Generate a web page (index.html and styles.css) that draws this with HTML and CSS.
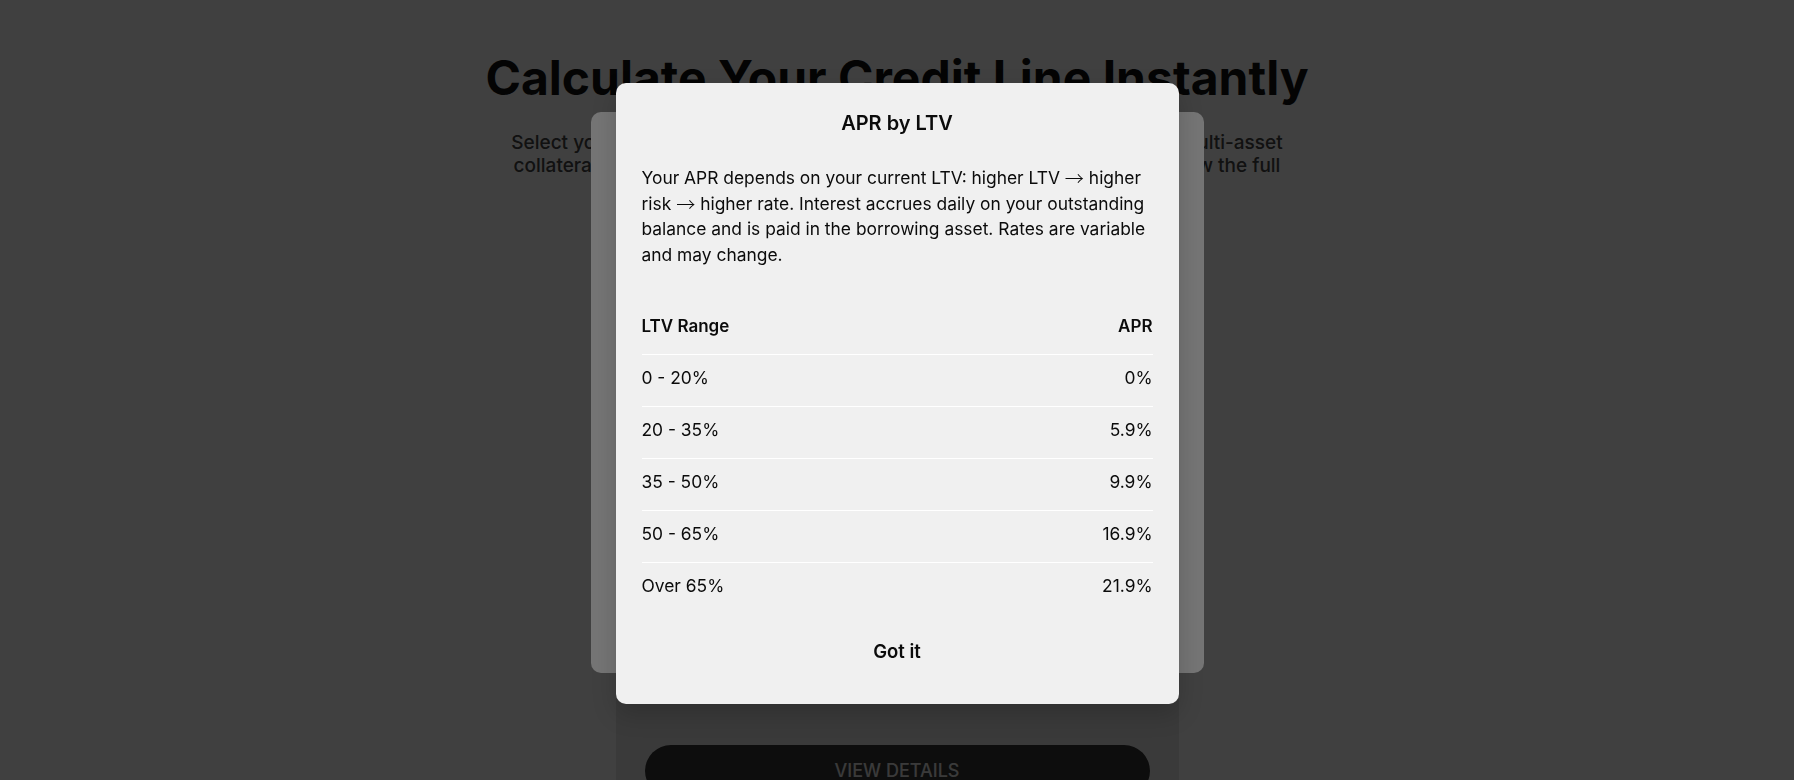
FILE: index.html
```html
<!DOCTYPE html>
<html lang="en">
<head>
    <meta charset="UTF-8">
    <meta name="viewport" content="width=device-width, initial-scale=1.0">
    <title>Credit Line Calculator</title>
    <link rel="stylesheet" href="styles.css">
</head>
<body>
    <main class="page">
        <header class="hero">
            <h1>Calculate Your Credit Line Instantly</h1>
            <p class="lead">
                Select your collateral assets and enter amounts to instantly estimate your multi-asset<br>
                collateral credit line. Adjust the loan-to-value ratio to compare rates and view the full
            </p>
        </header>

        <section class="calc-card">
            <div class="calc-body"></div>
            <button class="view-btn" disabled>VIEW DETAILS</button>
        </section>
    </main>

    <div class="overlay"></div>

    <div class="modal-layer">
        <div class="modal-stack">
            <div class="modal-back"></div>
            <div class="modal" role="dialog" aria-labelledby="modal-title">
                <h2 class="modal-title" id="modal-title">APR by LTV</h2>
                <p class="modal-text">Your APR depends on your current LTV: higher LTV <span class="arrow">→</span> higher risk <span class="arrow">→</span> higher rate. Interest accrues daily on your outstanding balance and is paid in the borrowing asset. Rates are variable and may change.</p>

                <table class="apr-table">
                    <thead>
                        <tr><th>LTV Range</th><th>APR</th></tr>
                    </thead>
                    <tbody>
                        <tr><td>0 - 20%</td><td>0%</td></tr>
                        <tr><td>20 - 35%</td><td>5.9%</td></tr>
                        <tr><td>35 - 50%</td><td>9.9%</td></tr>
                        <tr><td>50 - 65%</td><td>16.9%</td></tr>
                        <tr><td>Over 65%</td><td>21.9%</td></tr>
                    </tbody>
                </table>

                <button class="got-it">Got it</button>
            </div>
        </div>
    </div>
</body>
</html>
```
FILE: styles.css
```css
* {
    box-sizing: border-box;
}
body {
    margin: 0;
    background: #fff;
    font-family: Inter, "Liberation Sans", sans-serif;
    color: #111;
}

/* page under the dialog */
.hero {
    padding-top: 49px;
    text-align: center;
}
.hero h1 {
    margin: 0;
    font-size: 48px;
    line-height: 58px;
    font-weight: 700;
    color: #111;
}
.lead {
    margin: 24px 0 0;
    font-size: 19px;
    line-height: 23.3px;
    font-weight: 500;
    color: #444;
}
.calc-card {
    width: 563px;
    margin: 32px auto 0;
    padding: 29px;
    background: #e8e8e8;
    border-radius: 10px;
}
.calc-body {
    height: 506px;
}
.view-btn {
    display: block;
    width: 100%;
    height: 52px;
    border: none;
    border-radius: 26px;
    background: #343434;
    color: #e8e8e8;
    font-family: inherit;
    font-size: 18px;
    font-weight: 500;
}

/* dialog */
.overlay {
    position: fixed;
    inset: 0;
    background: rgba(0, 0, 0, 0.75);
}
.modal-layer {
    position: fixed;
    inset: 0;
    display: flex;
    justify-content: center;
    align-items: flex-start;
    padding-top: 83px;
}
.modal-stack {
    position: relative;
    width: 563px;
}
.modal-back {
    position: absolute;
    top: 29px;
    bottom: 31px;
    left: -25px;
    right: -25px;
    background: #757575;
    border-radius: 10px;
}
.modal {
    position: relative;
    padding: 26px 26px 27px;
    background: #f0f0f0;
    border-radius: 10px;
    box-shadow: 0 10px 24px rgba(0, 0, 0, 0.18);
    color: #0b0b0b;
}
.modal-title {
    margin: 0;
    text-align: center;
    font-size: 20px;
    line-height: 28px;
    font-weight: 600;
}
.modal-text {
    margin: 28px 0 0;
    font-size: 17.4px;
    line-height: 25.7px;
}
.arrow {
    font-family: "Noto Sans CJK SC", sans-serif;
    font-size: 1.1em;
    font-weight: 300;
    line-height: 1;
    vertical-align: -2px;
}
.apr-table {
    width: 100%;
    margin-top: 35px;
    border-collapse: collapse;
    font-size: 17.4px;
    line-height: 24px;
}
.apr-table th,
.apr-table td {
    padding: 11px 0 16px;
    text-align: left;
}
.apr-table th {
    font-size: 17px;
    font-weight: 600;
}
.apr-table th:last-child,
.apr-table td:last-child {
    text-align: right;
}
.apr-table tr {
    border-bottom: 1px solid #fff;
}
.apr-table tbody tr:last-child {
    border-bottom: none;
}
.got-it {
    display: block;
    width: 100%;
    margin-top: 11px;
    padding: 14px 0;
    border: none;
    background: none;
    font-family: inherit;
    font-size: 18.5px;
    line-height: 24px;
    font-weight: 600;
    color: #0b0b0b;
    cursor: pointer;
}
```
